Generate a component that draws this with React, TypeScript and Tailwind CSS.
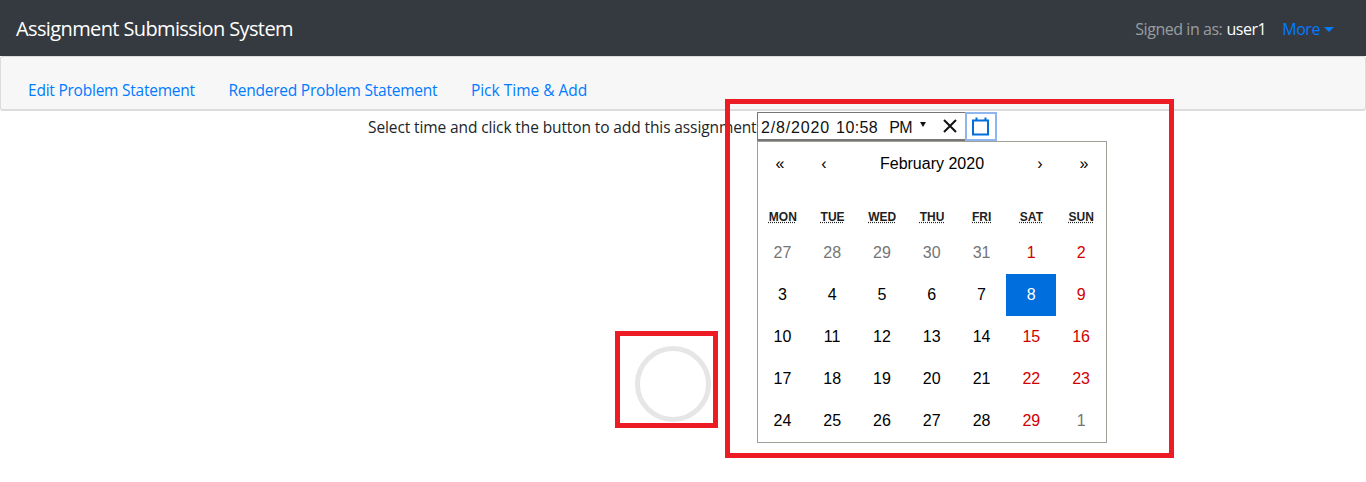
const weekdays = ["MON", "TUE", "WED", "THU", "FRI", "SAT", "SUN"];

const days = [
  27, 28, 29, 30, 31, 1, 2,
  3, 4, 5, 6, 7, 8, 9,
  10, 11, 12, 13, 14, 15, 16,
  17, 18, 19, 20, 21, 22, 23,
  24, 25, 26, 27, 28, 29, 1,
];

const dayClass = (index: number) => {
  if (index === 12) return "bg-[#006edc] text-white";
  if (index < 5 || index === 34) return "text-[#757575]";
  if (index % 7 >= 5) return "text-[#d10000]";
  return "text-black";
};

const Navbar = () => (
  <nav className="flex h-14 items-center justify-between bg-[#343a40] pl-4 pr-8 pt-[2px]">
    <div className="text-[20px] tracking-[-0.62px] text-white">Assignment Submission System</div>
    <div className="flex items-center text-base tracking-[-0.45px]">
      <span className="text-[#9a9da0]">Signed in as:</span>
      <span className="ml-1 text-white">user1</span>
      <span className="ml-4 text-[#007bff]">More</span>
      <span className="ml-1 h-0 w-0 border-x-[5px] border-t-[5px] border-x-transparent border-t-[#007bff]" />
    </div>
  </nav>
);

const Tabs = () => (
  <div className="flex h-[55px] items-end gap-[33.5px] rounded-[3px] border border-b-2 border-[#dcdcdc] bg-[#f7f7f7] pb-[7px] pl-[27px] text-[15.5px] tracking-[-0.23px] text-[#007bff]">
    <span className="leading-6">Edit Problem Statement</span>
    <span className="leading-6">Rendered Problem Statement</span>
    <span className="leading-6 tracking-normal">Pick Time &amp; Add</span>
  </div>
);

const CalendarIcon = () => (
  <svg width="19" height="19" viewBox="0 0 19 19" fill="none" stroke="#006edc" strokeWidth="2">
    <rect x="2" y="3.5" width="15" height="14" />
    <path d="M5.5 0.5V3M14.5 0.5V3" />
  </svg>
);

const CloseIcon = () => (
  <svg width="14" height="14" viewBox="0 0 14 14" fill="none" stroke="#111" strokeWidth="2">
    <path d="M1 1L13 13M13 1L1 13" />
  </svg>
);

const Picker = () => (
  <div className="font-['Liberation_Sans',sans-serif]">
    <div className="flex h-[29px] w-[240px] items-center border-t border-b-2 border-l border-[#767676] bg-white text-base text-[#111]">
      <span className="ml-[3px] mt-[3px] tracking-[0.85px]">2/8/2020</span>
      <span className="ml-[6px] mt-[3px] tracking-[0.4px]">10:58</span>
      <span className="ml-[11px] mt-[3px] -tracking-[0.5px]">PM</span>
      <span className="ml-[8px] mb-1 h-0 w-0 border-x-[3px] border-t-[5px] border-x-transparent border-t-[#111]" />
      <span className="ml-[17px] flex"><CloseIcon /></span>
      <span className="ml-auto -mt-px -mb-[2px] flex h-[29px] w-[32px] items-center justify-center border-2 border-[#8fb5ef] pr-px">
        <CalendarIcon />
      </span>
    </div>
    <div className="w-[350px] border border-[#a0a096] bg-white text-base">
      <div className="flex h-11 items-center text-black">
        <span className="w-11 text-center">«</span>
        <span className="w-11 text-center">‹</span>
        <span className="flex-1 text-center">February 2020</span>
        <span className="w-11 text-center">›</span>
        <span className="w-11 text-center">»</span>
      </div>
      <div className="mt-[21px] grid grid-cols-7">
        {weekdays.map((day) => (
          <div key={day} className="pb-[5px] text-center text-xs font-bold leading-[20px] text-[#222]">
            <span className="underline decoration-dotted">{day}</span>
          </div>
        ))}
      </div>
      <div className="-ml-[0.5px] grid grid-cols-7">
        {days.map((day, index) => (
          <div key={index} className={`flex h-[42px] items-center justify-center ${dayClass(index)}`}>
            {day}
          </div>
        ))}
      </div>
    </div>
  </div>
);

const App = () => (
  <div className="relative h-[482px] w-[1366px] overflow-hidden bg-white font-['Open_Sans',sans-serif] text-[#212529]">
    <Navbar />
    <Tabs />
    <div className="relative h-[371px]">
      <div className="absolute left-[368px] top-[2px] text-[15.5px] leading-[29px] tracking-[-0.11px]">
        Select time and click the button to add this assignment
      </div>
      <div className="absolute left-[757px] top-px">
        <Picker />
      </div>
      <div className="absolute left-[635px] top-[235px] h-[76px] w-[76px] rounded-full border-[5px] border-[#e6e6e6]" />
      <div className="absolute left-[615px] top-[220px] h-[97px] w-[103px] border-[5px] border-[#ed1c24]" />
      <div className="absolute left-[725px] top-[-12px] h-[359px] w-[449px] border-[5px] border-[#ed1c24]" />
    </div>
  </div>
);

export default App;
